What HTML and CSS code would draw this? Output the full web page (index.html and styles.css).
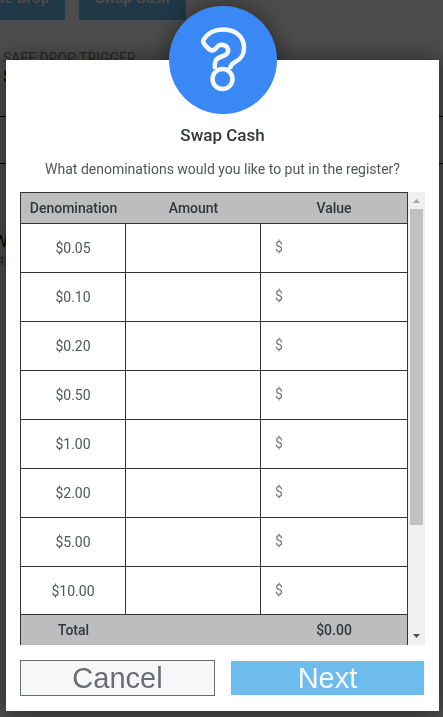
FILE: index.html
```html
<!DOCTYPE html>
<html lang="en">
<head>
<meta charset="utf-8">
<meta name="viewport" content="width=device-width, initial-scale=1">
<title>Swap Cash</title>
<link rel="stylesheet" href="styles.css">
</head>
<body>
<div class="page" inert>
  <div class="actions">
    <button class="action" type="button">Safe Drop</button>
    <button class="action" type="button">Swap Cash</button>
  </div>
  <p class="label">SAFE DROP TRIGGER</p>
  <p class="amount">$</p>
  <div class="band"></div>
  <p class="day">W</p>
  <p class="note">4:</p>
</div>
<div class="overlay">
  <section class="modal" role="dialog" aria-labelledby="title">
    <div class="badge">
      <svg viewBox="0 0 108 108" aria-hidden="true">
        <path d="M46 63C45 55 47 52 54 50Q60 48 59 43Q57 38 51 39C47 40 48 44 43 44.500Q40 44 36 39Q33 36 35 33C39 27 46 23.500 54 23.500C67 23.500 75 31 75 42C75 51 70 54 66 56Q61 59 61 63"/>
        <circle cx="53.500" cy="73" r="10"/>
      </svg>
    </div>
    <h1 id="title">Swap Cash</h1>
    <p class="question">What denominations would you like to put in the register?</p>
    <div class="scroller">
      <table>
        <colgroup><col class="col-denom"><col class="col-amount"><col></colgroup>
        <thead><tr><th>Denomination</th><th>Amount</th><th>Value</th></tr></thead>
        <tbody>
          <tr><td>$0.05</td><td><input aria-label="Amount of $0.05"></td><td class="value">$</td></tr>
          <tr><td>$0.10</td><td><input aria-label="Amount of $0.10"></td><td class="value">$</td></tr>
          <tr><td>$0.20</td><td><input aria-label="Amount of $0.20"></td><td class="value">$</td></tr>
          <tr><td>$0.50</td><td><input aria-label="Amount of $0.50"></td><td class="value">$</td></tr>
          <tr><td>$1.00</td><td><input aria-label="Amount of $1.00"></td><td class="value">$</td></tr>
          <tr><td>$2.00</td><td><input aria-label="Amount of $2.00"></td><td class="value">$</td></tr>
          <tr><td>$5.00</td><td><input aria-label="Amount of $5.00"></td><td class="value">$</td></tr>
          <tr><td>$10.00</td><td><input aria-label="Amount of $10.00"></td><td class="value">$</td></tr>
        </tbody>
        <tfoot><tr><th>Total</th><th></th><th>$0.00</th></tr></tfoot>
      </table>
      <div class="scrollbar" aria-hidden="true">
        <svg class="arrow arrow-up" viewBox="0 0 17 17"><path d="M5 11L8.500 7L12 11Z"/></svg>
        <div class="track"><div class="thumb"></div></div>
        <svg class="arrow" viewBox="0 0 17 17"><path d="M5 6L8.500 10L12 6Z"/></svg>
      </div>
    </div>
    <div class="buttons">
      <button class="cancel" type="button">Cancel</button>
      <button class="next" type="button">Next</button>
    </div>
  </section>
</div>
</body>
</html>
```

FILE: styles.css
```css
* { box-sizing: border-box; }
body { margin: 0; font-family: Roboto, sans-serif; color: #32363c; background: #fff; }
h1, p { margin: 0; }
button { margin: 0; cursor: pointer; }

/* Page behind the dialog */
.page { height: 100vh; overflow: hidden; }
.actions { display: flex; gap: 14px; height: 20px; align-items: flex-end; margin-left: -33px; }
.action { flex: none; height: 44px; padding: 0 16px; border: 0; background: #6ebbee; color: #fff; font: bold 14px/44px "Liberation Sans", sans-serif; }
.label { margin: 28px 0 0 3px; font-size: 14px; line-height: 20px; color: #888; }
.amount { margin-left: 3px; font-size: 16px; line-height: 18px; color: #000; }
.band { height: 48px; margin-top: 30px; border: solid #000; border-width: 1px 0; }
.day { margin-top: 66px; margin-left: -7px; font-size: 17px; line-height: 22px; color: #000; }
.note { margin-left: -3px; font-size: 13px; line-height: 18px; color: #888; }

/* Dialog */
.overlay { position: fixed; inset: 0; padding: 60px 4px 6px 6px; background: rgba(0, 0, 0, .7); }
.modal { position: relative; padding: 0 14px 15px; background: #fff; box-shadow: 0 0 24px rgba(0, 0, 0, .5); }
.badge, .modal::before { position: absolute; left: 50%; top: -54px; width: 108px; height: 108px; margin-left: -54px; border-radius: 50%; }
.modal::before { content: ""; z-index: -1; box-shadow: 0 0 24px rgba(0, 0, 0, .5); }
.badge { background: #3988f5; }
.badge svg { display: block; fill: none; stroke: #f7f8fa; stroke-width: 4.500; stroke-linejoin: round; }
.modal h1 { padding-top: 64px; font-size: 17px; line-height: 22px; font-weight: 500; text-align: center; }
.question { margin-top: 13px; font-size: 14px; line-height: 20px; text-align: center; color: #50555c; }

/* Denomination table */
.scroller { display: flex; margin-top: 13px; }
table { flex: 1; min-width: 0; table-layout: fixed; border-collapse: separate; border-spacing: 0; border: solid #32343a; border-width: 1px 0 0 1px; font-size: 14px; line-height: 20px; text-align: center; }
.col-denom { width: 105px; }
.col-amount { width: 135px; }
th, td { padding: 0; border: 0 solid #32343a; }
th { background: #bdbdbd; font-weight: 500; }
th:last-child { border-right-width: 1px; }
thead th { height: 31px; border-bottom-width: 1px; }
tfoot th { height: 30px; }
td { height: 49px; border-width: 0 1px 1px 0; color: #50555c; }
tbody tr:last-child td { height: 48px; }
td input { display: block; width: 100%; height: 46px; padding: 0 14px; border: 0; outline: 0; background: transparent; font: inherit; color: inherit; }
td.value { padding: 0 0 2px 14px; text-align: left; color: #74787e; }

.scrollbar { display: flex; flex-direction: column; flex: none; width: 17px; background: #f0f0f0; }
.arrow { display: block; width: 17px; height: 17px; fill: #505050; }
.arrow-up { fill: #a3a3a3; }
.track { flex: 1; padding: 0 2px; }
.thumb { height: 316px; background: #c1c1c1; }

.buttons { display: grid; grid-template-columns: 1fr 1fr; gap: 15px; margin-top: 15px; }
.buttons button { height: 36px; padding: 0; border: 1px solid #696d75; font: 29px/34px "Liberation Sans", Arial, sans-serif; }
.cancel { background: #f7f7f8; color: #696d75; }
.buttons .next { border-color: #f7f7f8; background: #6ebbee; color: #f7f7f8; }
```
